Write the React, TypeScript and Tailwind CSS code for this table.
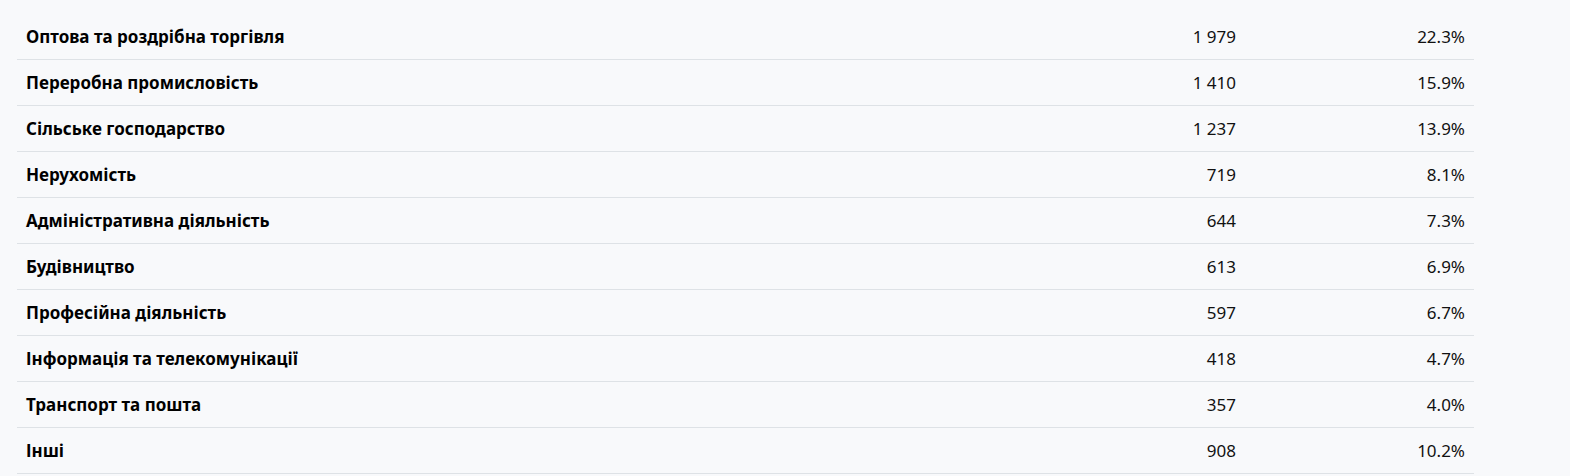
import React from "react";

const rows: [string, string, string][] = [
  ["Оптова та роздрібна торгівля", "1 979", "22.3%"],
  ["Переробна промисловість", "1 410", "15.9%"],
  ["Сільське господарство", "1 237", "13.9%"],
  ["Нерухомість", "719", "8.1%"],
  ["Адміністративна діяльність", "644", "7.3%"],
  ["Будівництво", "613", "6.9%"],
  ["Професійна діяльність", "597", "6.7%"],
  ["Інформація та телекомунікації", "418", "4.7%"],
  ["Транспорт та пошта", "357", "4.0%"],
  ["Інші", "908", "10.2%"],
];

export default function App() {
  return (
    <div
      className="w-full min-h-[476px] bg-[#f8f9fb] pt-[13px] pl-[17px]"
      style={{ fontFamily: '"Noto Sans", "Open Sans", sans-serif' }}
    >
      <table className="w-[1457px] border-collapse text-[17px] text-[#111]">
        <tbody>
          {rows.map(([name, count, pct]) => (
            <tr key={name} className="h-[46px] border-b border-[#dee2e6]">
              <td className="pl-[9px] pt-[2px] font-bold text-black align-middle">{name}</td>
              <td className="w-[240px] pr-[9px] pt-[2px] text-right align-middle">{count}</td>
              <td className="w-[229px] pr-[9px] pt-[2px] text-right align-middle">{pct}</td>
            </tr>
          ))}
        </tbody>
      </table>
    </div>
  );
}
